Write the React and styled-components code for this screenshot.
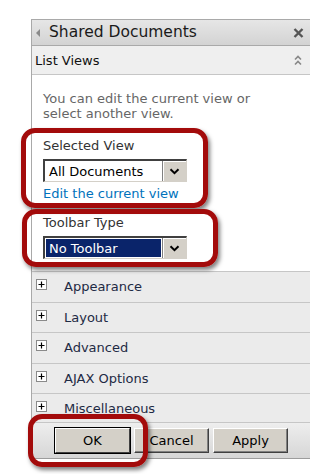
import React from "react"
import styled, { createGlobalStyle } from "styled-components"

const Global = createGlobalStyle`
body{
    margin: 0;
    background: #FFFFFF;
    font-family: "DejaVu Sans", Verdana, sans-serif;
}
`

const Page = styled.div`
width: 310px;
height: 474px;
padding: 19px 0 0 31px;
box-sizing: border-box;
overflow: hidden;
`

const Panel = styled.div`
width: 279px;
border-left: 1px solid #a9a9a9;
border-top: 1px solid #a9a9a9;
`

const Header = styled.div`
height: 25px;
display: flex;
align-items: center;
padding: 0 7px 0 4px;
background: linear-gradient(#e6e6e6, #d3d3d3);
border-bottom: 1px solid #a9a9a9;
color: #1a1a1a;

.titulo{
    font-size: 15.5px;
    margin-left: 9px;
    flex: 1;
    padding-bottom: 1px;
}
`

const SectionTitle = styled.div`
height: 28px;
display: flex;
align-items: center;
padding: 0 9px 0 3px;
background: #efefef;
border-bottom: 1px solid #c6c6c6;
font-size: 13px;
color: #111111;

span{
    flex: 1;
}
`

const Scroll = styled.div`
height: 347px;
overflow-y: clip;
overflow-x: visible;
`

const Content = styled.div`
background: #FFFFFF;
padding: 16px 11px 12px 11px;
font-size: 13px;
line-height: 15px;
`

const Description = styled.p`
margin: 0 0 17px 0;
max-width: 222px;
color: #666666;
`

const Field = styled.div`
position: relative;
margin-top: ${props => props.$top || 0}px;
`

const Label = styled.div`
color: #333333;
margin-bottom: 6px;
`

const Highlight = styled.div`
position: absolute;
left: ${props => props.$left}px;
top: ${props => props.$top}px;
width: ${props => props.$width}px;
height: ${props => props.$height}px;
box-sizing: border-box;
border: 5px solid #a30b0b;
border-radius: 14px;
box-shadow: 2px 3px 4px rgba(0, 0, 0, 0.5);
pointer-events: none;
z-index: 2;
`

const Select = styled.div`
width: 144px;
height: ${props => props.$height}px;
box-sizing: border-box;
display: flex;
border-top: 2px solid #404040;
border-left: 2px solid #404040;
border-right: 1px solid #d4d0c8;
border-bottom: 1px solid #d4d0c8;
background: #FFFFFF;
`

const SelectValue = styled.div`
flex: 1;
display: flex;
align-items: center;
padding-left: 4px;
font-size: 13px;
color: ${props => props.$ativo ? "#FFFFFF" : "#000000"};
background: ${props => props.$ativo ? "#0a246a" : "#FFFFFF"};
outline: ${props => props.$ativo ? "1px solid #FFFFFF" : "none"};
outline-offset: -1px;
`

const SelectButton = styled.div`
width: 23px;
display: flex;
align-items: center;
justify-content: center;
background: #d4d0c8;
border-left: 1px solid #808080;
box-shadow: inset 1px 1px 0 #FFFFFF;
`

const Link = styled.a`
display: block;
margin-top: 4px;
color: #0072bc;
text-decoration: none;
`

const Row = styled.div`
height: 29.5px;
display: flex;
align-items: center;
padding-left: 4px;
background: #ebebeb;
border-top: 1px solid #c6c6c6;
font-size: 13px;
color: #1e2a44;
`

const PlusBox = styled.span`
width: 11px;
height: 11px;
box-sizing: border-box;
border: 1px solid #8a8a8a;
background: #FFFFFF;
margin-right: 17px;
display: flex;
align-items: center;
justify-content: center;
margin-top: -4px;
`

const ButtonBar = styled.div`
height: 30px;
display: flex;
gap: 4px;
padding: 5px 0 0 23px;
background: linear-gradient(#eeeeee, #d6d6d6);
border-top: 1px solid #c6c6c6;
border-bottom: 1px solid #9c9c9c;
`

const Botao = styled.button`
position: relative;
width: 75px;
height: 25px;
padding: 0;
font-family: "DejaVu Sans", Verdana, sans-serif;
font-size: 13px;
color: #000000;
background: #d4d0c8;
border: 1px solid;
border-color: #FFFFFF #404040 #404040 #FFFFFF;
box-shadow: ${props => props.$padrao ? "0 0 0 1px #000000" : "inset -1px -1px 0 #808080"};
`

function Chevron({ cor }) {
    return (
        <svg width="11" height="7" viewBox="0 0 11 7">
            <path d="M1.5 1.2 L5.5 5.2 L9.5 1.2" fill="none" stroke={cor} strokeWidth="2" />
        </svg>
    )
}

function Plus() {
    return (
        <svg width="7" height="7" viewBox="0 0 7 7">
            <path d="M3.5 0.5 V6.5 M0.5 3.5 H6.5" stroke="#000" strokeWidth="1.2" />
        </svg>
    )
}

const secoes = ["Appearance", "Layout", "Advanced", "AJAX Options", "Miscellaneous"]

export default function App() {
    return (
        <Page>
            <Global />
            <Panel>
                <Header>
                    <svg width="4" height="8" viewBox="0 0 4 8">
                        <path d="M4 0 L0 4 L4 8 Z" fill="#8a8a8a" />
                    </svg>
                    <span className="titulo">Shared Documents</span>
                    <svg width="11" height="10" viewBox="0 0 11 10">
                        <path d="M1.5 1 L9.5 9 M9.5 1 L1.5 9" stroke="#555" strokeWidth="2.4" />
                    </svg>
                </Header>
                <SectionTitle>
                    <span>List Views</span>
                    <svg width="8" height="11" viewBox="0 0 8 11">
                        <path d="M1 4.5 L4 1.5 L7 4.5 M1 9.5 L4 6.5 L7 9.5" fill="none" stroke="#888" strokeWidth="1.6" />
                    </svg>
                </SectionTitle>
                <Scroll>
                    <Content>
                        <Description>You can edit the current view or select another view.</Description>
                        <Field>
                            <Highlight $left={-22} $top={-10} $width={187} $height={80} />
                            <Label>Selected View</Label>
                            <Select $height={23}>
                                <SelectValue>All Documents</SelectValue>
                                <SelectButton><Chevron cor="#000" /></SelectButton>
                            </Select>
                            <Link href="#">Edit the current view</Link>
                        </Field>
                        <Field $top={14}>
                            <Highlight $left={-21} $top={-6} $width={196} $height={58} />
                            <Label>Toolbar Type</Label>
                            <Select $height={23}>
                                <SelectValue $ativo>No Toolbar</SelectValue>
                                <SelectButton><Chevron cor="#000" /></SelectButton>
                            </Select>
                        </Field>
                    </Content>
                    {secoes.map(s => (
                        <Row key={s}>
                            <PlusBox><Plus /></PlusBox>
                            {s}
                        </Row>
                    ))}
                </Scroll>
                <ButtonBar>
                    <Botao $padrao>
                        OK
                        <Highlight $left={-28} $top={-15} $width={120} $height={53} />
                    </Botao>
                    <Botao>Cancel</Botao>
                    <Botao>Apply</Botao>
                </ButtonBar>
            </Panel>
        </Page>
    )
}
